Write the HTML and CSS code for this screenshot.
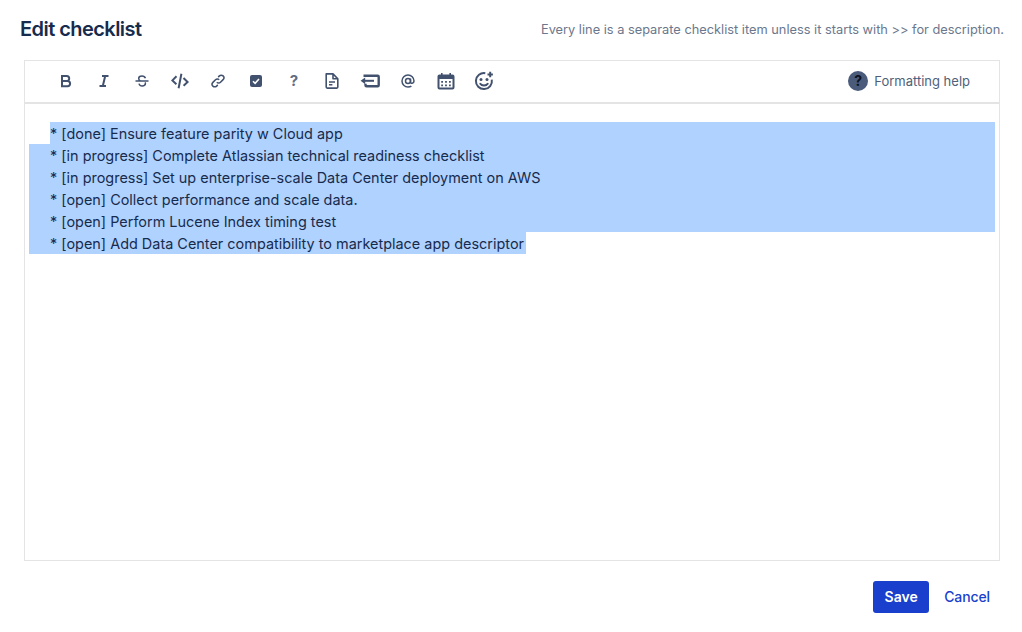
FILE: index.html
```html
<!DOCTYPE html>
<html lang="en">
<head>
<meta charset="utf-8">
<title>Edit checklist</title>
<link rel="stylesheet" href="styles.css">
</head>
<body>
<div class="dialog">
  <header class="head">
    <h1 class="title">Edit checklist</h1>
    <p class="hint">Every line is a separate checklist item unless it starts with &gt;&gt; for description.</p>
  </header>
  <section class="editor">
    <div class="toolbar">
      <div class="tools">
        <svg class="ico" viewBox="0 0 16 16"><path class="s2" d="M4 3h4.700a2.500 2.500 0 0 1 0 5H4zM4 8h5.500a2.600 2.600 0 0 1 0 5.200H4z"/></svg>
        <svg class="ico" viewBox="0 0 16 16"><path class="s2" d="M6 3h6.500M3.500 13H10M9.200 3 6.800 13"/></svg>
        <svg class="ico" viewBox="0 0 16 16"><path class="s15" d="M1.500 8h13M11.400 5.200C11 3.800 9.800 3 8 3 6 3 4.700 4 4.700 5.400c0 1 .5 1.800 1.600 2.400M5 10.600c.4 1.500 1.600 2.400 3.200 2.400 2 0 3.200-1 3.200-2.400 0-.5-.1-.9-.3-1.200"/></svg>
        <svg class="ico code" viewBox="0 0 18 16"><path class="s2" d="M5.500 3.200 1.400 7.400l4 3.800M12.500 5l4.100 4-4 3.800M10.400 .8 7.600 15.200"/></svg>
        <svg class="ico" viewBox="0 0 16 16"><path class="s15" d="M6.800 9.200a2.600 2.600 0 0 0 3.700 0l2.600-2.600a2.600 2.600 0 0 0-3.700-3.700L8.200 4.100M9.200 6.800a2.600 2.600 0 0 0-3.700 0L2.900 9.400a2.600 2.600 0 0 0 3.700 3.700l1.200-1.200"/></svg>
        <svg class="ico" viewBox="0 0 16 16"><rect class="fill" x="2" y="2" width="12" height="12" rx="2"/><path class="check" d="m5 8.200 2.100 2.100L11 6"/></svg>
        <span class="ico q">?</span>
        <svg class="ico" viewBox="0 0 16 16"><path class="s15j" d="M2.200 .9h6.800l4.800 4.800v8.400a1 1 0 0 1-1 1H3.200a1 1 0 0 1-1-1zM9 1.100v4.600h4.600M5 9h6M5 11.800h3.400"/></svg>
        <svg class="ico wide" viewBox="0 0 20 16"><path class="s25" d="M3.500 2.800h14.200a1 1 0 0 1 1 1v8.400a1 1 0 0 1-1 1H6.500a1 1 0 0 1-1-1v-1.400"/><path class="s2" d="M14 7.800H2.500"/><path class="fill" d="M5.200 4.400v6.800L.6 7.800z"/></svg>
        <svg class="ico" viewBox="0 0 16 16"><circle class="s15" cx="8" cy="8" r="2.500"/><path class="s15" d="M10.500 5.500v3.400c0 2.200 3.500 1.800 3.500-.9A6 6 0 1 0 8 14c1.500 0 2.500-.3 3.400-.9"/></svg>
        <svg class="ico wide2" viewBox="0 0 18 18"><path class="s2" d="M2.500 3.500h13a1 1 0 0 1 1 1v11a1 1 0 0 1-1 1h-13a1 1 0 0 1-1-1v-11a1 1 0 0 1 1-1z"/><path class="fill" d="M1.500 4h15v3h-15zM4 1h1.600v3H4zM12.400 1H14v3h-1.600zM4.200 9h1.800v1.800H4.200zM8.100 9h1.800v1.800H8.100zM12 9h1.800v1.800H12zM4.200 12.500h1.800v1.800H4.200zM8.100 12.500h1.800v1.800H8.100zM12 12.500h1.800v1.800H12z"/></svg>
        <svg class="ico wide2" viewBox="0 0 20 20"><path class="s2" d="M11.300 2.200A8 8 0 1 0 17.800 8.700"/><circle class="fill" cx="7" cy="8.500" r="1.500"/><circle class="fill" cx="13" cy="8.500" r="1.500"/><path class="s2" d="M5.800 12.300c1 1.600 2.500 2.300 4.200 2.300s3.200-.7 4.200-2.300M16.200 .8v5.400M13.500 3.500h5.400"/></svg>
      </div>
      <a class="help" href="#"><span class="help-ico">?</span>Formatting help</a>
    </div>
    <div class="content">
      <div class="line first">* [done] Ensure feature parity w Cloud app</div>
      <div class="line">* [in progress] Complete Atlassian technical readiness checklist</div>
      <div class="line">* [in progress] Set up enterprise-scale Data Center deployment on AWS</div>
      <div class="line">* [open] Collect performance and scale data.</div>
      <div class="line">* [open] Perform Lucene Index timing test</div>
      <div class="line last">* [open] Add Data Center compatibility to marketplace app descriptor</div>
    </div>
  </section>
  <footer class="actions">
    <button class="save" type="button">Save</button>
    <a class="cancel" href="#">Cancel</a>
  </footer>
</div>
</body>
</html>
```
FILE: styles.css
```css
* { box-sizing: border-box; }
html, body { margin: 0; height: 100%; background: #fff; }
body { font-family: Inter, "Liberation Sans", sans-serif; color: #172b4d; overflow: hidden; }
.dialog { width: 1022px; height: 632px; display: flex; flex-direction: column; padding: 0 18px 19px 20px; }
.head { height: 60px; display: flex; justify-content: space-between; align-items: flex-start; padding-top: 17px; }
.title { margin: 0; font-size: 20px; line-height: 24px; font-weight: 600; letter-spacing: -0.55px; color: #172b4d; }
.hint { margin: 0; padding-top: 5px; font-size: 12.8px; line-height: 16px; color: #6b778c; }
.editor { margin: 0 4px; height: 501px; border: 1px solid #e4e4e4; display: flex; flex-direction: column; }
.toolbar { height: 43px; flex: none; border-bottom: 2px solid #e4e4e4; display: flex; align-items: center; justify-content: space-between; padding: 0 29px 2px 33px; }
.tools { display: flex; align-items: center; gap: 22px; }
.ico { width: 16px; height: 16px; display: block; flex: none; }
.code { width: 18px; margin: 0 -1px; }
.wide { width: 20px; margin: 0 -2px; }
.wide2 { width: 18px; height: 18px; margin: 0 -1px; }
.wide2:last-child { width: 20px; height: 20px; margin: 0 -2px; }
.s2, .s25, .s15, .s15j, .check { fill: none; stroke: #42526e; }
.s2 { stroke-width: 2; }
.s25 { stroke-width: 2.4; }
.s15 { stroke-width: 1.5; }
.s15j { stroke-width: 1.6; stroke-linejoin: round; }
.fill { fill: #42526e; }
.check { stroke: #fff; stroke-width: 1.6; }
.q { font-size: 15px; font-weight: 700; line-height: 16px; text-align: center; color: #5e6c84; }
.help { display: flex; align-items: center; gap: 6px; font-size: 13px; line-height: 20px; color: #505f79; text-decoration: none; }
.help-ico { width: 20px; height: 20px; border-radius: 50%; background: #4a5b7b; color: #0b1220; font-size: 14px; font-weight: 700; line-height: 20px; text-align: center; }
.content { flex: 1; padding: 18px 4px 0; font-size: 14.45px; line-height: 22px; color: #172b4d; }
.line { height: 22px; line-height: 24px; padding-left: 21px; background: #b0d2ff; white-space: nowrap; }
.first { margin-left: 21px; padding-left: 0; }
.last { width: 497px; }
.actions { margin-top: 20px; display: flex; align-items: center; justify-content: flex-end; gap: 15px; padding-right: 14px; }
.save { width: 56px; height: 32px; border: 0; border-radius: 3px; background: #1a3fcc; color: #fff; font: 600 14px/20px Inter, "Liberation Sans", sans-serif; padding: 0; }
.cancel { font-size: 14px; line-height: 20px; font-weight: 500; color: #1a3fcc; text-decoration: none; letter-spacing: -0.1px; }
```
